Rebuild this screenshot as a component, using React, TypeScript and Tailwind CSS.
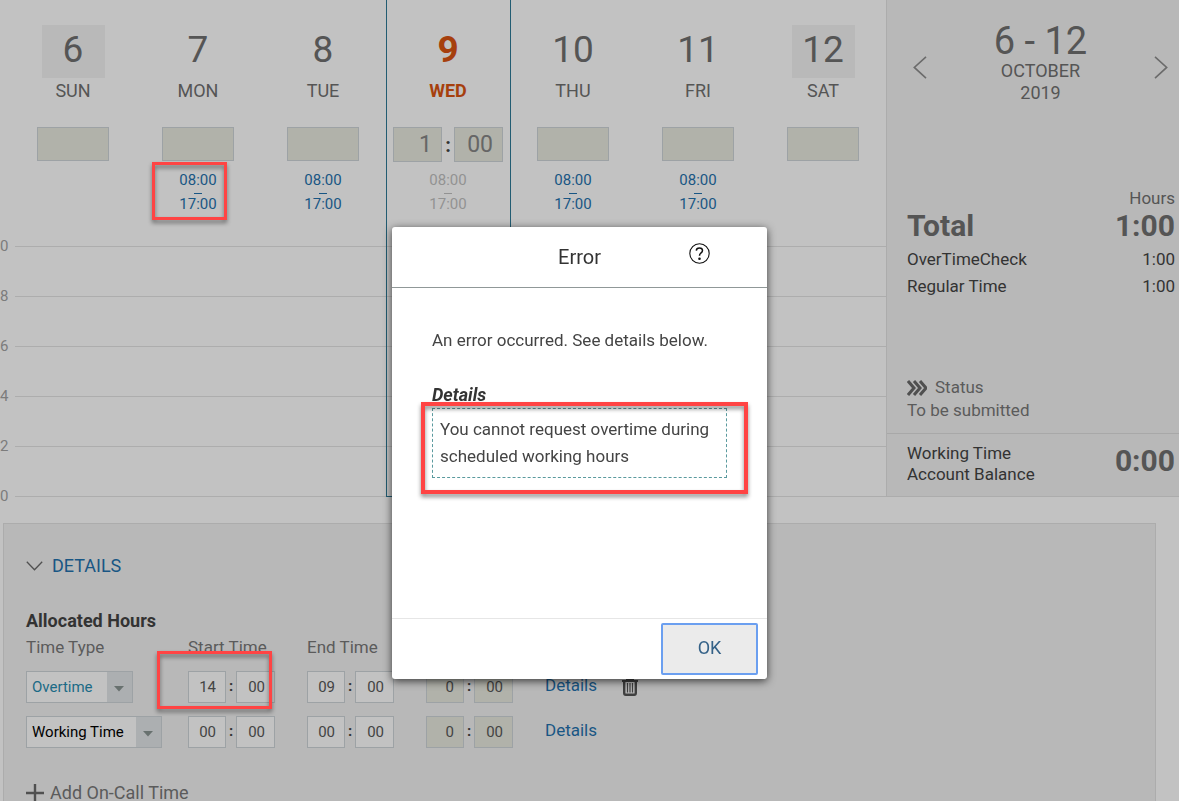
import clsx from 'clsx';

const days = [
  { date: '6', name: 'SUN', off: true },
  { date: '7', name: 'MON', schedule: ['08:00', '17:00'], marked: true },
  { date: '8', name: 'TUE', schedule: ['08:00', '17:00'] },
  { date: '9', name: 'WED', schedule: ['08:00', '17:00'], today: true },
  { date: '10', name: 'THU', schedule: ['08:00', '17:00'] },
  { date: '11', name: 'FRI', schedule: ['08:00', '17:00'] },
  { date: '12', name: 'SAT', off: true },
];

type Day = (typeof days)[number];

const scale = ['0', '8', '6', '4', '2', '0'];

const rows = [
  { type: 'Overtime', start: ['14', '00'], end: ['09', '00'], removable: true },
  { type: 'Working Time', start: ['00', '00'], end: ['00', '00'], removable: false },
];

function Marker({ className }: { className: string }) {
  return (
    <div
      className={clsx(
        'pointer-events-none absolute border-[#ff4444] drop-shadow-[0_3px_2px_rgba(0,0,0,0.45)]',
        className,
      )}
    />
  );
}

function DayColumn({ day }: { day: Day }) {
  return (
    <div className="relative flex flex-col items-center pt-[25px] pr-px text-[#555]">
      <div
        className={clsx(
          'flex h-[53px] w-[63px] items-center justify-center pb-1 text-[37px]',
          day.off && 'bg-[#b9b9b9]',
          day.today && 'font-bold text-[#a63f0d]',
        )}
      >
        {day.date}
      </div>
      <div className={clsx('text-lg leading-[25px]', day.today && 'font-bold text-[#a63f0d]')}>
        {day.name}
      </div>
      {day.today ? (
        <div className="mt-6 flex items-center text-[23px] text-[#666]">
          <input
            aria-label="WED hours"
            defaultValue="1"
            className="h-[35px] w-[49px] border border-[#9da2a5] bg-[#b1b2aa] pr-[9px] pb-px text-right"
          />
          <span className="w-3 text-center text-xl font-bold text-[#333]">:</span>
          <input
            aria-label="WED minutes"
            defaultValue="00"
            className="h-[35px] w-[49px] border border-[#9da2a5] bg-[#b1b2aa] pr-[9px] pb-px text-right"
          />
        </div>
      ) : (
        <input
          aria-label={`${day.name} hours`}
          className="mt-6 h-[34px] w-[72px] border border-[#9da2a5] bg-[#b1b2aa]"
        />
      )}
      {day.schedule && (
        <a
          href="#schedule"
          className={clsx(
            'absolute top-[172px] flex flex-col items-center text-[15px] leading-4',
            day.today ? 'text-[#929292]' : 'text-[#195684]',
          )}
        >
          <span>{day.schedule[0]}</span>
          <span className="my-[5px] h-px w-2 bg-current" />
          <span className="-mt-[3px]">{day.schedule[1]}</span>
        </a>
      )}
      {day.marked && <Marker className="top-[162px] left-4 h-[58px] w-[75px] border-3" />}
    </div>
  );
}

function Calendar() {
  return (
    <section className="relative min-w-0 flex-1">
      <div className="grid h-[221px] grid-cols-7 pl-[11px]">
        {days.map((day) => (
          <DayColumn key={day.name} day={day} />
        ))}
      </div>
      {scale.map((value, i) => (
        <div key={i} className="flex h-[50px] items-center">
          <span className="w-[15px] text-[15px] text-[#7c7c7c]">{value}</span>
          <span className="h-px flex-1 bg-[#adadad]" />
        </div>
      ))}
      {/* frame round today's column */}
      <div className="pointer-events-none absolute inset-x-0 top-0 grid h-[497px] grid-cols-7 pl-[11px]">
        <div className="col-start-4 border-x border-b border-[#225c72]" />
      </div>
    </section>
  );
}

function Summary() {
  return (
    <aside className="flex h-[497px] w-[293px] shrink-0 flex-col border-b border-l border-[#acacac] bg-[#b8b8b8] text-[17px] text-[#333]">
      <div className="flex h-[164px] items-start justify-between pt-5 pr-[11px] pl-[26px] text-lg text-[#555]">
        <button aria-label="Previous week" className="mt-9">
          <svg width="14" height="23" viewBox="0 0 14 23" fill="none" stroke="#6b6b6b" strokeWidth="1.6">
            <path d="M13 0.8L1.3 11.4L13 22.2" />
          </svg>
        </button>
        <div className="pt-px text-center leading-[22px]">
          <div className="pt-[2px] text-[38px] leading-[37px]">6 - 12</div>
          <div>OCTOBER</div>
          <div>2019</div>
        </div>
        <button aria-label="Next week" className="mt-9">
          <svg width="14" height="23" viewBox="0 0 14 23" fill="none" stroke="#6b6b6b" strokeWidth="1.6">
            <path d="M1 0.8L12.7 11.4L1 22.2" />
          </svg>
        </button>
      </div>
      <div className="flex flex-col pt-5 pr-1 pl-5">
        <div className="text-right leading-7 text-[#555]">Hours</div>
        <div className="flex justify-between text-[30px] leading-7 font-bold text-[#555]">
          <span>Total</span>
          <span>1:00</span>
        </div>
        <div className="mt-[6px] flex justify-between leading-[27px]">
          <span>OverTimeCheck</span>
          <span>1:00</span>
        </div>
        <div className="flex justify-between leading-[27px]">
          <span>Regular Time</span>
          <span>1:00</span>
        </div>
      </div>
      <div className="mt-auto border-b border-[#a8a8a8] pb-[11px] pl-5 leading-[23px] text-[#5b5b5b]">
        <div className="flex items-center gap-2">
          <svg width="20" height="16" viewBox="0 0 20 16" fill="none" stroke="#505050" strokeWidth="3">
            <path d="M1 1L7 8L1 15M7 1L13 8L7 15M13 1L19 8L13 15" />
          </svg>
          Status
        </div>
        <div>To be submitted</div>
      </div>
      <div className="flex h-[62px] items-start justify-between pt-[9px] pr-1 pl-5 leading-[21px]">
        <div>
          Working Time
          <br />
          Account Balance
        </div>
        <div className="text-[30px] leading-[35px] font-bold text-[#555]">0:00</div>
      </div>
    </aside>
  );
}

function TimeInput({ label, value, readOnly }: { label: string; value: string[]; readOnly?: boolean }) {
  const box = clsx(
    'h-8 border border-[#9da2a5] pt-px text-right text-[15px] text-[#444]',
    readOnly ? 'bg-[#b1b2aa]' : 'bg-[#c2c2c2]',
  );

  return (
    <div className="flex items-center text-[15px] text-[#333]">
      <input aria-label={`${label} hours`} defaultValue={value[0]} readOnly={readOnly} className={clsx(box, 'w-[38px] pr-[9px]')} />
      <span className="w-[10px] text-center font-bold">:</span>
      <input aria-label={`${label} minutes`} defaultValue={value[1]} readOnly={readOnly} className={clsx(box, 'w-[39px] pr-[9px]')} />
    </div>
  );
}

function TypeSelect({ type }: { type: string }) {
  const overtime = type === 'Overtime';

  return (
    <div className={clsx('relative', overtime ? 'w-[107px]' : 'w-[136px]')}>
      <select
        aria-label="Time Type"
        defaultValue={type}
        className={clsx(
          'block h-8 w-full appearance-none border border-[#9da2a5] bg-[#c2c2c2] pt-[3px] pl-[5px] text-[15px]',
          overtime ? 'text-[#1b6a86]' : 'text-black',
        )}
      >
        <option>Overtime</option>
        <option>Working Time</option>
      </select>
      <span className="pointer-events-none absolute inset-y-px right-px flex w-[25px] items-center justify-center bg-[#acafb1] pt-1 pr-px">
        <svg width="10" height="6" viewBox="0 0 10 6" fill="#68716f">
          <path d="M0 0H10L5 5.6Z" />
        </svg>
      </span>
    </div>
  );
}

function TrashIcon() {
  return (
    <svg width="16" height="18" viewBox="0 0 16 18" fill="none" stroke="#3f3f3f">
      <path d="M0 3H16M5 2.5V1H11V2.5" strokeWidth="2" />
      <path d="M2.2 3.5V15Q2.2 16.8 3.8 16.8H12.2Q13.8 16.8 13.8 15V3.5" strokeWidth="2.4" />
      <path d="M5.5 5V14.5M8 5V14.5M10.5 5V14.5" strokeWidth="1.2" />
    </svg>
  );
}

function Details() {
  return (
    <section className="relative mt-[2px] mr-[23px] ml-[3px] flex-1 border border-b-0 border-[#acacac] bg-[#b8b8b8] pt-[30px] pl-[22px] text-lg text-[#5b5b5b]">
      <button className="flex items-center gap-[9px] leading-6 text-[#195684]">
        <svg width="17" height="10" viewBox="0 0 17 10" fill="none" stroke="#505050" strokeWidth="1.3">
          <path d="M0.8 0.8L8.5 8.8L16.2 0.8" />
        </svg>
        DETAILS
      </button>
      <h2 className="mt-[31px] leading-6 font-bold text-[#333]">Allocated Hours</h2>
      <table className="table-fixed text-left text-[17px]">
        <colgroup>
          <col className="w-[162px]" />
          <col className="w-[119px]" />
          <col className="w-[119px]" />
          <col className="w-[119px]" />
          <col className="w-[77px]" />
          <col className="w-[40px]" />
        </colgroup>
        <thead>
          <tr className="h-[31px]">
            <th className="p-0 pb-[2px] font-normal">Time Type</th>
            <th className="p-0 pb-[2px] font-normal">Start Time</th>
            <th className="p-0 pb-[2px] font-normal">End Time</th>
            <td colSpan={3} />
          </tr>
        </thead>
        <tbody>
          {rows.map((row) => (
            <tr key={row.type} className="h-[45px]">
              <td className="p-0">
                <TypeSelect type={row.type} />
              </td>
              <td className="p-0">
                <TimeInput label="Start Time" value={row.start} />
              </td>
              <td className="p-0">
                <TimeInput label="End Time" value={row.end} />
              </td>
              <td className="p-0">
                <TimeInput label="Duration" value={['0', '00']} readOnly />
              </td>
              <td className="p-0 pb-[2px]">
                <a href="#details" className="text-[#195684]">
                  Details
                </a>
              </td>
              <td className="p-0">
                {row.removable && (
                  <button aria-label="Delete" className="block">
                    <TrashIcon />
                  </button>
                )}
              </td>
            </tr>
          ))}
        </tbody>
      </table>
      <button className="mt-[26px] flex items-center gap-[6px] leading-6">
        <svg width="18" height="18" viewBox="0 0 18 18" stroke="#505050" strokeWidth="2.4">
          <path d="M9 0V18M0 9H18" />
        </svg>
        <span className="pt-px">Add On-Call Time</span>
      </button>
      <Marker className="top-[127px] left-[153px] h-[58px] w-[115px] border-3" />
    </section>
  );
}

function ErrorDialog() {
  return (
    <div className="fixed inset-0 flex items-start justify-center pt-[227px] pr-5">
      <div
        role="alertdialog"
        aria-labelledby="error-title"
        className="relative flex h-[452px] w-[375px] flex-col rounded-[3px] bg-white text-lg text-[#444] shadow-[0_2px_8px_rgba(0,0,0,0.7)]"
      >
        <header className="grid h-[61px] grid-cols-[1fr_auto_1fr] items-center border-b border-[#909898]">
          <h1 id="error-title" className="col-start-2 text-xl text-[#333]">
            Error
          </h1>
          <button aria-label="Help" className="mb-2 ml-[88px]">
            <svg width="21" height="21" viewBox="0 0 21 21" fill="none" stroke="#111">
              <circle cx="10.5" cy="10.5" r="9.7" strokeWidth="1.1" />
              <path d="M7.3 7.6Q7.5 5 10.4 5Q13.5 5 13.5 7.6Q13.5 9 11.9 10Q10.5 11 10.5 12.7" strokeWidth="1.5" />
              <circle cx="10.5" cy="15.8" r="1.3" fill="#111" stroke="none" />
            </svg>
          </button>
        </header>
        <div className="flex-1 px-10 pt-[39px] text-[17px] leading-[27px]">
          <p>An error occurred. See details below.</p>
          <h2 className="mt-[27px] text-lg leading-[27px] font-bold text-[#333] italic">Details</h2>
          <div className="border border-dashed border-[#5a9a9e] py-[7px] pl-[7px]">
            <p>You cannot request overtime during scheduled working hours</p>
          </div>
        </div>
        <footer className="flex justify-end border-t border-[#e6e6e6] pt-1 pr-[9px] pb-1">
          <button className="h-[52px] w-[97px] rounded-[2px] border-2 border-[#6b9ff0] bg-[#ebebeb] pb-[2px] text-[#346187]">
            OK
          </button>
        </footer>
        <Marker className="top-[175px] left-[29px] h-[92px] w-[327px] border-4" />
      </div>
    </div>
  );
}

export default function App() {
  return (
    <div className="flex h-screen flex-col overflow-hidden bg-[#c2c2c2] font-[Roboto,sans-serif]">
      <div className="flex items-start">
        <Calendar />
        <Summary />
      </div>
      <Details />
      <ErrorDialog />
    </div>
  );
}
